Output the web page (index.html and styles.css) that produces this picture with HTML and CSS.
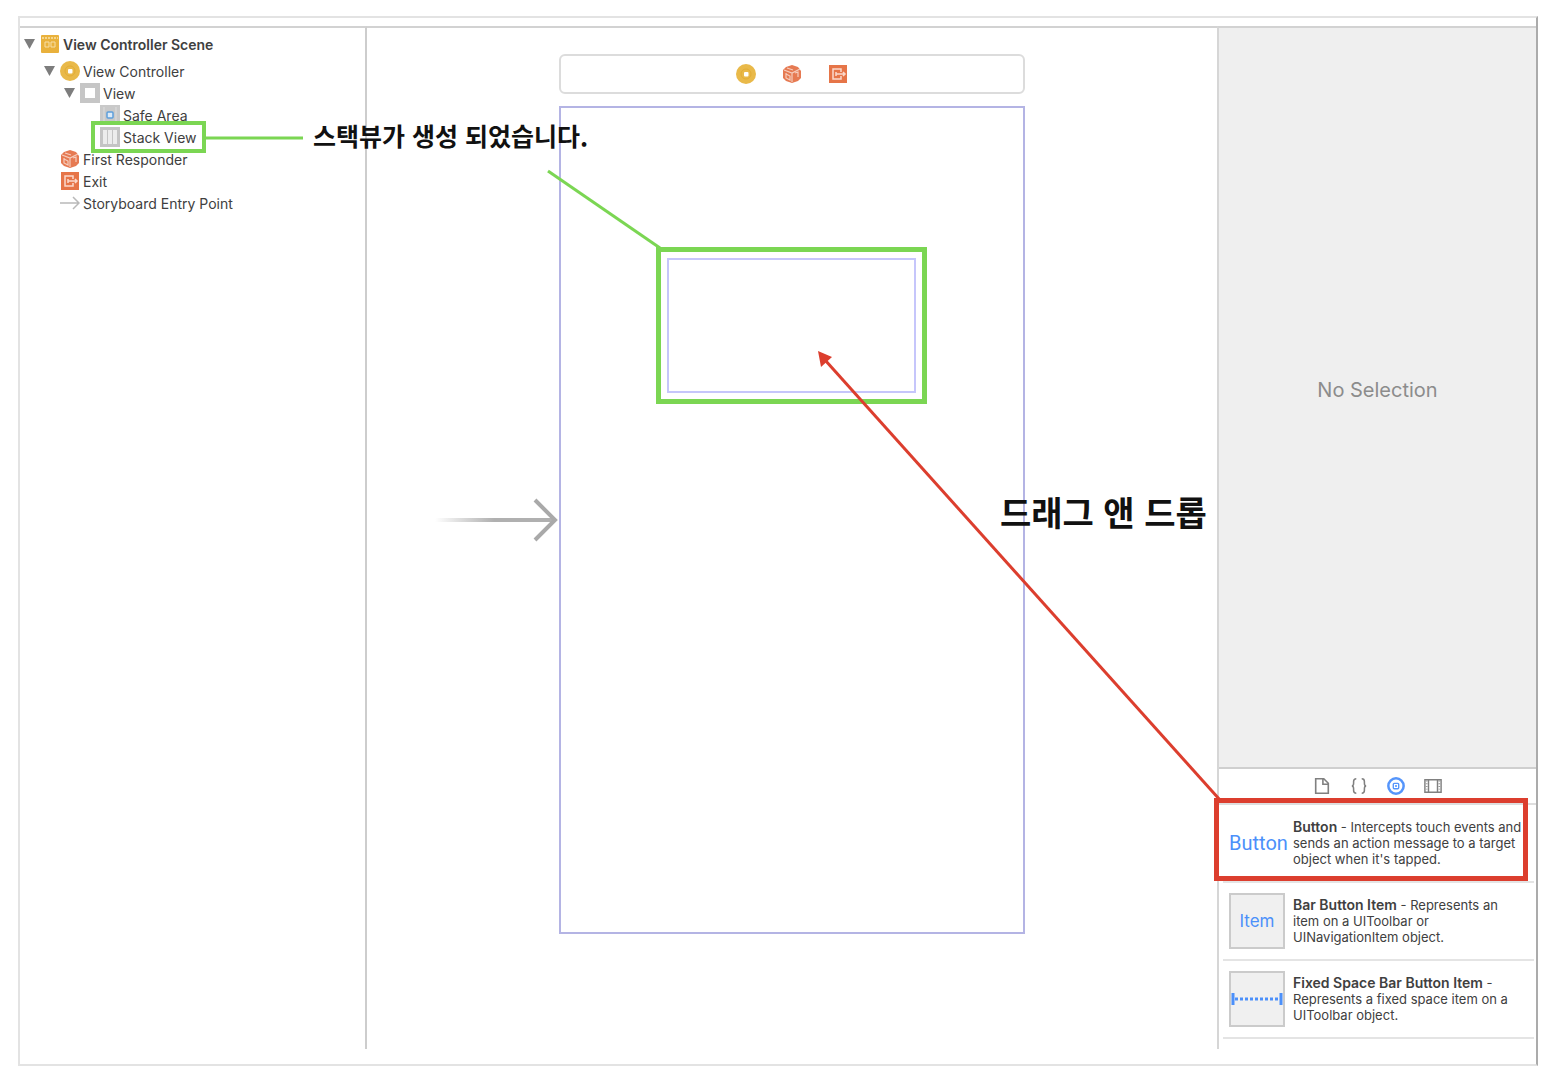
FILE: index.html
```html
<!DOCTYPE html>
<html lang="ko">
<head>
<meta charset="utf-8">
<title>Interface Builder</title>
<link rel="stylesheet" href="styles.css">
</head>
<body>
<svg class="symbols" aria-hidden="true">
  <symbol id="controller" viewBox="0 0 20 20">
    <circle cx="10" cy="10" r="10" fill="#e9b949"/>
    <circle cx="10" cy="10" r="5" fill="none" stroke="#e3ad35" stroke-width="1"/>
    <rect x="8" y="8" width="4.500" height="4.500" rx="1" fill="#fff"/>
  </symbol>
  <symbol id="responder" viewBox="0 0 20 20">
    <path d="M10 1l6 2 3 4v7l-3 3-6 2-6-2-3-3V6l3-3z" fill="#e67a52"/>
    <path d="M2 6l8 3 8-4M10 9v9M4 9v5l4 2v-4l-4-2M13 9l3-1v5M5 4l6 2" fill="none" stroke="#f6cdbd" stroke-width="1.200"/>
  </symbol>
  <symbol id="exit" viewBox="0 0 20 20">
    <rect x="1" y="1" width="18" height="18" fill="#e67548"/>
    <path d="M13 8V5H5v10h8v-3M8 8v4M8 10h9M15 8l2 2-2 2" fill="none" stroke="#fbd9cb" stroke-width="1.500"/>
  </symbol>
</svg>

<main class="workspace">
  <nav class="outline" aria-label="Document outline">
    <ul class="tree">
      <li class="row row-scene"><button class="disclosure" aria-label="Collapse scene"></button>
        <svg class="icon" viewBox="0 0 20 20"><rect x="1" y="1" width="18" height="18" rx="1" fill="#e9b13c"/><path d="M2 4h16" stroke="#f5d68d" stroke-width="2" stroke-dasharray="2 1"/><path d="M5 8h4v5H5zM11 8h4v5h-4z" fill="none" stroke="#f7dfa8"/></svg>
        <span>View Controller Scene</span></li>
      <li class="row level-1"><button class="disclosure" aria-label="Collapse controller"></button><svg class="icon"><use href="#controller"/></svg><span>View Controller</span></li>
      <li class="row level-2"><button class="disclosure" aria-label="Collapse view"></button>
        <svg class="icon" viewBox="0 0 20 20"><rect width="20" height="20" fill="#c6c6c6"/><rect x="5" y="5" width="10" height="10" fill="#fff"/></svg><span>View</span></li>
      <li class="row level-3"><i class="spacer"></i>
        <svg class="icon" viewBox="0 0 20 20"><rect width="20" height="20" fill="#c9c9c9"/><path d="M4 2v16M16 2v16" stroke="#dedede"/><rect x="7" y="7" width="6" height="6" rx="1" fill="#dcebf8" stroke="#5c9fdc" stroke-width="1.500"/></svg><span>Safe Area</span></li>
      <li class="row level-3 marked"><i class="spacer"></i>
        <svg class="icon" viewBox="0 0 20 20"><rect width="20" height="20" fill="#c4c4c4"/><path d="M3 3h4v14H3zM8 3h4v14H8zM13 3h4v14h-4z" fill="#ececec"/></svg><span>Stack View</span></li>
      <li class="row level-1"><i class="spacer"></i><svg class="icon"><use href="#responder"/></svg><span>First Responder</span></li>
      <li class="row level-1"><i class="spacer"></i><svg class="icon"><use href="#exit"/></svg><span>Exit</span></li>
      <li class="row level-1"><i class="spacer"></i>
        <svg class="icon" viewBox="0 0 20 20"><path d="M0 10h18M13 4l6 6-6 6" fill="none" stroke="#b9b9b9" stroke-width="1.500"/></svg><span>Storyboard Entry Point</span></li>
    </ul>
  </nav>

  <section class="canvas" aria-label="Storyboard">
    <div class="scene">
      <div class="dock">
        <svg class="icon"><use href="#controller"/></svg>
        <svg class="icon"><use href="#responder"/></svg>
        <svg class="icon"><use href="#exit"/></svg>
      </div>
      <div class="device">
        <div class="stack-highlight"><div class="stack"></div></div>
        <svg class="entry" viewBox="0 0 124 44" aria-hidden="true">
          <defs><linearGradient id="fade"><stop offset="0" stop-color="#b0b0b0" stop-opacity="0"/><stop offset=".5" stop-color="#b0b0b0"/></linearGradient></defs>
          <rect x="0" y="20" width="118" height="4" fill="url(#fade)"/>
          <path d="M100 2l20 20-20 20" fill="none" stroke="#a9a9a9" stroke-width="4"/>
        </svg>
      </div>
    </div>
  </section>

  <aside class="inspector">
    <p class="empty">No Selection</p>
    <div class="tabs">
      <button class="tab" aria-label="File templates"><svg class="icon" viewBox="0 0 20 20"><path d="M3 2h9l5 5v11H3zM11 2v6h6" fill="none" stroke="#808080" stroke-width="1.800"/></svg></button>
      <button class="tab" aria-label="Code snippets"><svg class="icon" viewBox="0 0 20 20"><path d="M7 2Q4 2 4 5v2q0 3-2 3q2 0 2 3v2q0 3 3 3M13 2q3 0 3 3v2q0 3 2 3q-2 0-2 3v2q0 3-3 3" fill="none" stroke="#808080" stroke-width="1.700"/></svg></button>
      <button class="tab" aria-label="Objects"><svg class="icon" viewBox="0 0 20 20"><circle cx="10" cy="10" r="8.500" fill="none" stroke="#5595fb" stroke-width="2.800"/><rect x="7" y="7" width="6" height="6" rx="1" fill="none" stroke="#5595fb" stroke-width="1.500"/><rect x="9" y="9" width="2" height="2" fill="#5595fb"/></svg></button>
      <button class="tab" aria-label="Media"><svg class="icon" viewBox="0 0 20 20"><path d="M1 3h18v14H1zM5 3v14M15 3v14" fill="none" stroke="#808080" stroke-width="1.600"/><path d="M3 4v12M17 4v12" stroke="#9a9a9a" stroke-width="2" stroke-dasharray="1 2"/></svg></button>
    </div>
    <ul class="library">
      <li class="item chosen"><div class="thumb thumb-plain">Button</div><p><b>Button</b> - Intercepts touch events and sends an action message to a target object when it's tapped.</p></li>
      <li class="item"><div class="thumb">Item</div><p><b>Bar Button Item</b> - Represents an item on a UIToolbar or UINavigationItem object.</p></li>
      <li class="item"><div class="thumb"><svg viewBox="0 0 52 14" width="52" height="14"><path d="M2 1v12M50 1v12" stroke="#4c90fa" stroke-width="3"/><path d="M4 7h44" stroke="#4c90fa" stroke-width="3" stroke-dasharray="3 2"/></svg></div><p><b>Fixed Space Bar Button Item</b> - Represents a fixed space item on a UIToolbar object.</p></li>
    </ul>
  </aside>
</main>

<svg class="pointers" viewBox="0 0 1556 1086" aria-hidden="true">
  <path d="M205 138H303" stroke="#7bd653" stroke-width="3"/>
  <path d="M548 171L660 248" stroke="#7bd653" stroke-width="3"/>
  <path d="M1220 800L825 360" stroke="#dc3e2e" stroke-width="3"/>
  <path d="M818 351l14 6-11 10z" fill="#dc3e2e"/>
</svg>
<p class="note note-created">스택뷰가 생성 되었습니다.</p>
<p class="note note-drag">드래그 앤 드롭</p>
</body>
</html>
```
FILE: styles.css
```css
*, *::before, *::after { box-sizing: border-box; }

body {
  position: relative;
  display: flex;
  min-height: 100vh;
  margin: 0;
  padding: 16px 18px 20px;
  background: #fff;
  color: #404040;
  font-family: Inter, "Noto Sans CJK KR", sans-serif;
}

ul, p { margin: 0; padding: 0; list-style: none; }

button { padding: 0; border: 0; background: none; }

.symbols { position: absolute; width: 0; height: 0; }

.icon { flex: none; display: block; width: 20px; height: 20px; }

.workspace {
  flex: 1;
  display: grid;
  grid-template-columns: 347px 1fr 319px;
  padding: 8px 0 15px;
  border: 2px solid #e3e3e3;
  border-right-color: #ababab;
}

.outline, .canvas, .inspector { border-top: 2px solid #d2d2d2; }

/* document outline */
.outline { border-right: 2px solid #cdcdcd; }

.row {
  display: flex;
  align-items: center;
  height: 22px;
  padding-left: 4px;
  font-size: 14px;
  white-space: nowrap;
}
.row span { margin-left: 3px; }
.row-scene { height: 32px; font-weight: 600; }
.level-1 { padding-left: 24px; }
.level-2 { padding-left: 44px; }
.level-3 { padding-left: 64px; }

.disclosure, .spacer { flex: none; width: 16px; height: 10px; }
.disclosure::before {
  content: "";
  display: block;
  width: 11px;
  height: 10px;
  background: #7d7d7d;
  clip-path: polygon(0 0, 100% 0, 50% 100%);
}

.marked { position: relative; }
.marked::after {
  content: "";
  position: absolute;
  left: 71px;
  top: -5px;
  width: 115px;
  height: 32px;
  border: 4px solid #7bd653;
}

/* storyboard */
.canvas { display: flex; justify-content: center; padding-top: 26px; }

.scene { width: 466px; }

.dock {
  display: flex;
  align-items: center;
  justify-content: center;
  gap: 26px;
  height: 40px;
  margin-bottom: 12px;
  border: 2px solid #dcdcdc;
  border-radius: 6px;
}

.device {
  position: relative;
  height: 828px;
  padding: 139px 96px 0 95px;
  border: 2px solid #b4b4e4;
}

.stack-highlight { height: 157px; padding: 6px; border: 5px solid #7bd653; }
.stack { height: 100%; border: 2px solid #c6c6fb; }

.entry { position: absolute; left: -126px; top: 390px; width: 124px; height: 44px; }

/* inspector */
.inspector {
  display: flex;
  flex-direction: column;
  padding-bottom: 10px;
  border-left: 2px solid #d6d6d6;
}

.empty {
  flex: 1;
  display: flex;
  align-items: center;
  justify-content: center;
  padding-bottom: 16px;
  background: #efefef;
  color: #8c8c8c;
  font-size: 20px;
}

.tabs {
  display: flex;
  justify-content: center;
  height: 38px;
  border-top: 2px solid #cfcfcf;
  border-bottom: 2px solid #dedede;
}
.tab { display: grid; place-items: center; width: 37px; }
.tab .icon { width: 18px; height: 18px; }

.library { padding: 0 2px 0 4px; }

.item {
  display: flex;
  align-items: center;
  gap: 8px;
  height: 78px;
  padding: 0 8px 0 6px;
  border-bottom: 2px solid #e4e4e4;
  font-size: 13px;
  line-height: 16px;
}
.item p { flex: 1; }
.item b { font-size: 14px; font-weight: 600; }

.thumb {
  flex: none;
  display: grid;
  place-items: center;
  width: 56px;
  height: 56px;
  border: 2px solid #cbcbcb;
  background: #f0f0f0;
  color: #4c90fa;
  font-size: 17px;
}
.thumb-plain {
  border: 0;
  background: none;
  font-family: Roboto, sans-serif;
  font-size: 20px;
}

.chosen { position: relative; }
.chosen::after {
  content: "";
  position: absolute;
  left: -9px;
  top: -7px;
  right: 6px;
  height: 83px;
  border: 5px solid #dc3e2e;
}

/* annotations over the workspace */
.pointers { position: absolute; left: 0; top: 0; width: 1556px; height: 1086px; pointer-events: none; }

.note {
  position: absolute;
  color: #111;
  font-family: "Noto Sans CJK KR", sans-serif;
  font-weight: 700;
  white-space: nowrap;
}
.note-created { left: 313px; top: 117px; font-size: 25px; line-height: 36px; }
.note-drag { left: 1000px; top: 488px; font-size: 34px; line-height: 48px; }
```
